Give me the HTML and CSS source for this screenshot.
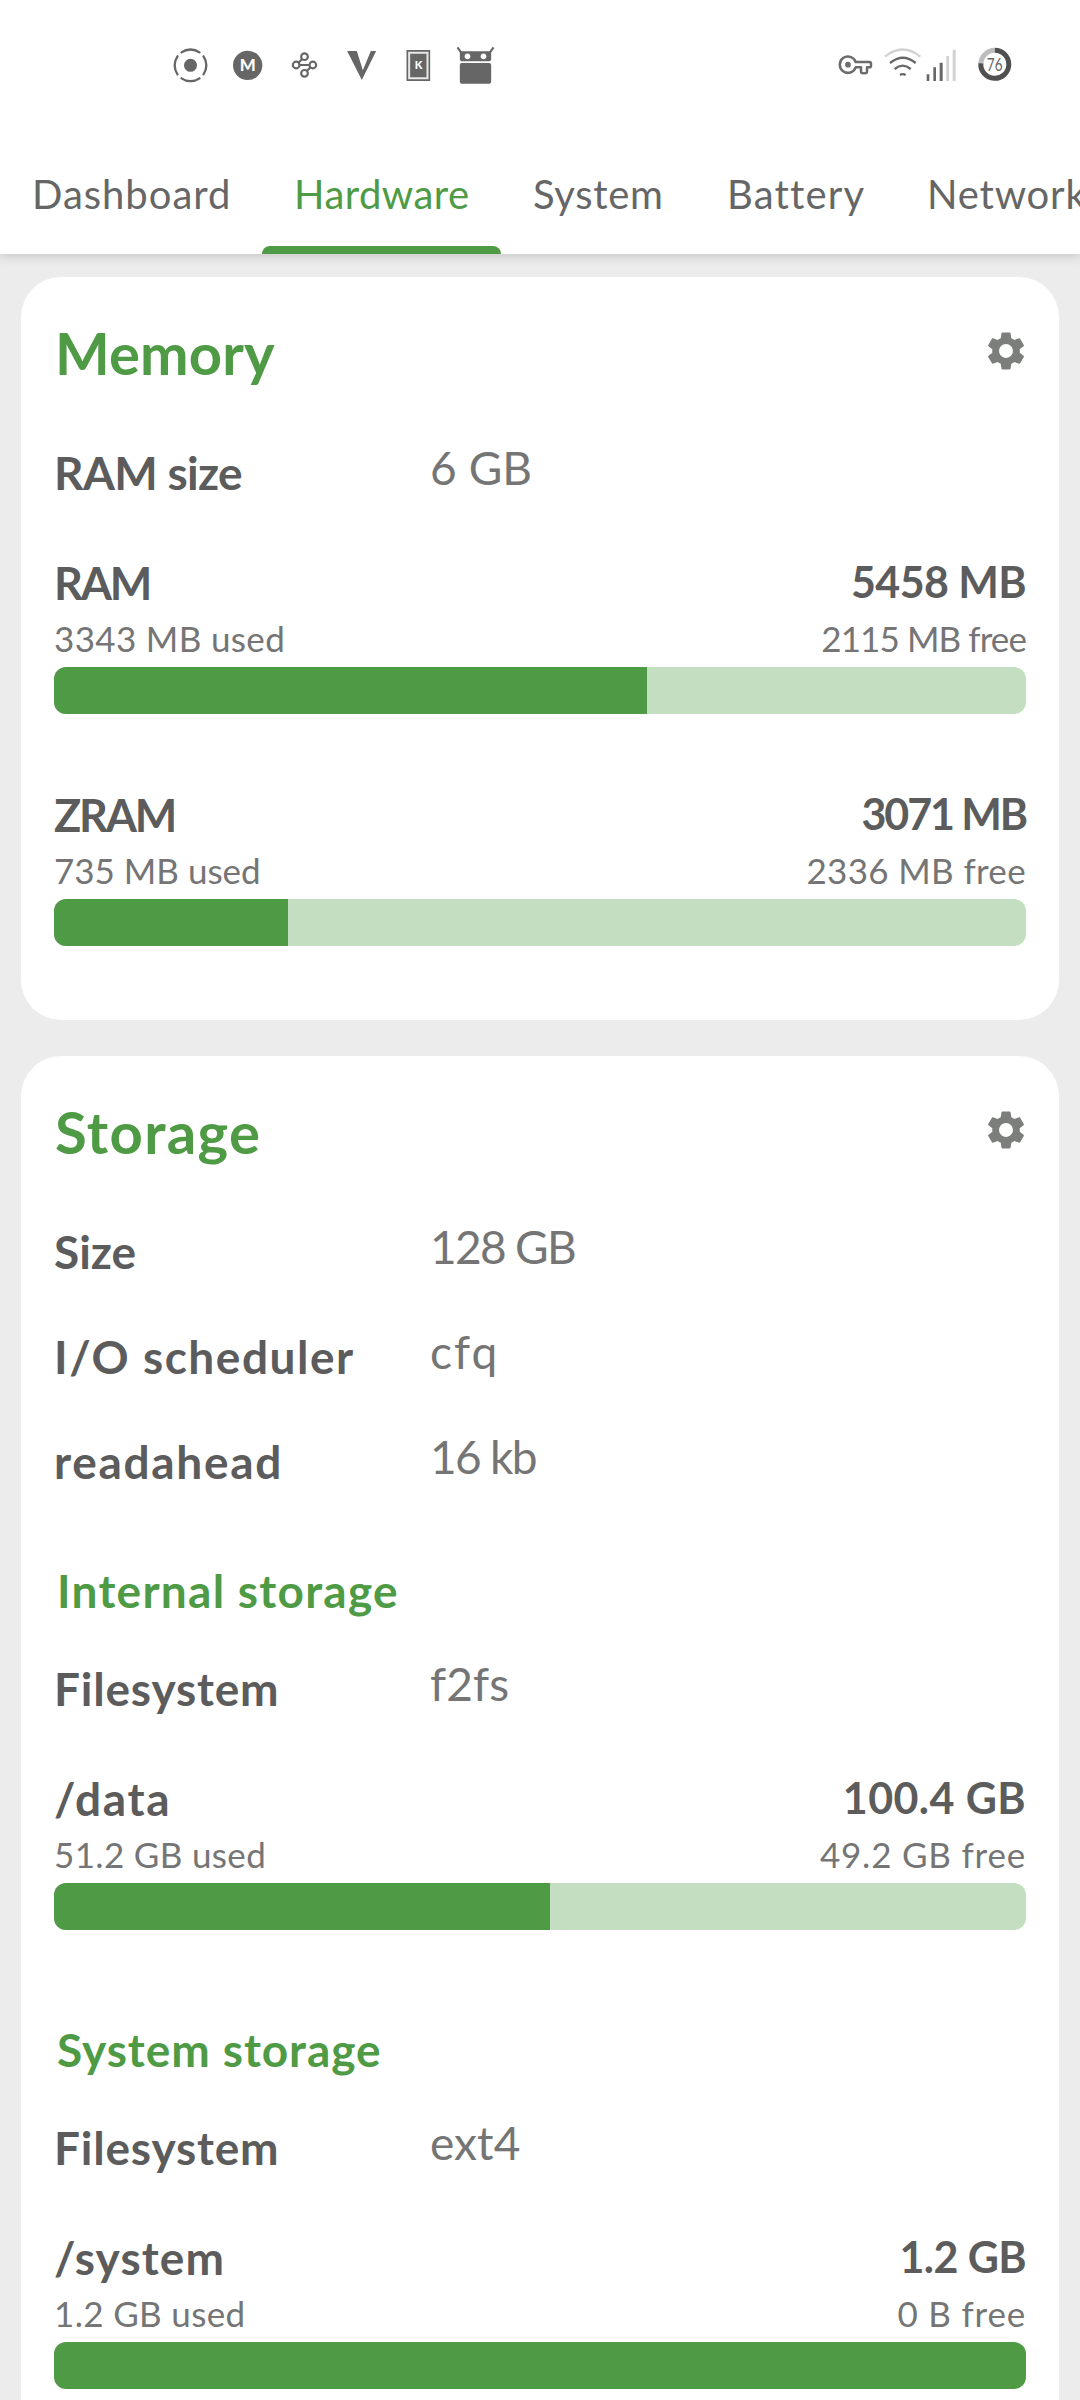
FILE: index.html
```
<!DOCTYPE html>
<html lang="en">
<head>
<meta charset="utf-8">
<title>Hardware</title>
<link rel="stylesheet" href="styles.css">
</head>
<body>
<svg class="defs" aria-hidden="true">
  <symbol id="gear" viewBox="0 0 24 24"><path d="M19.14 12.94c.04-.3.06-.61.06-.94 0-.32-.02-.64-.07-.94l2.03-1.58c.18-.14.23-.41.12-.61l-1.92-3.32c-.12-.22-.37-.29-.59-.22l-2.39.96c-.5-.38-1.03-.7-1.62-.94l-.36-2.54c-.04-.24-.24-.41-.48-.41h-3.84c-.24 0-.43.17-.47.41l-.36 2.54c-.59.24-1.13.57-1.62.94l-2.39-.96c-.22-.08-.47 0-.59.22L2.740 8.870c-.12.21-.08.47.12.61l2.030 1.580c-.05.3-.07.63-.07.94s.02.64.07.94l-2.030 1.580c-.18.14-.23.41-.12.61l1.920 3.320c.12.22.37.29.59.22l2.390-.96c.5.38 1.030.7 1.620.94l.36 2.540c.05.24.24.41.48.41h3.840c.24 0 .44-.17.47-.41l.36-2.540c.59-.24 1.130-.56 1.620-.94l2.390.96c.22.08.47 0 .59-.22l1.920-3.320c.12-.22.07-.47-.12-.61l-2.010-1.580zM12 15.600c-1.980 0-3.600-1.620-3.600-3.600s1.620-3.600 3.600-3.600 3.600 1.620 3.600 3.600-1.620 3.600-3.600 3.600z"/></symbol>
</svg>
<div class="screen">
  <header class="header">
    <div class="status">
      <div class="status-group">
        <svg class="notif" viewBox="35.5 45 171 120"><circle cx="121" cy="106" r="19.5" fill="#666"/><g fill="none" stroke="#666" stroke-width="7" stroke-linecap="round"><path d="M94 67a47 47 0 0 1 54 0M94 145a47 47 0 0 0 54 0M82 79a47 47 0 0 0 0 54M160 79a47 47 0 0 1 0 54"/></g></svg>
        <svg class="notif" viewBox="206.5 45 171 120"><circle cx="292.5" cy="106" r="44" fill="#666"/><text class="mark mark-m" x="268.5" y="124" textLength="48" lengthAdjust="spacingAndGlyphs">M</text></svg>
        <svg class="notif" viewBox="377.5 45 171 120"><g fill="none" stroke="#666" stroke-width="6.5"><circle cx="463" cy="80" r="10"/><circle cx="438" cy="105" r="10"/><circle cx="488" cy="105" r="10"/><circle cx="463" cy="130" r="10"/><path d="M456 87l-11 11M448 105h30M481 112l-11 11"/></g></svg>
        <svg class="notif" viewBox="548.5 45 171 120"><path d="M591 63h29l18 58 24-58h16l-43 87z" fill="#666"/></svg>
        <svg class="notif" viewBox="719.5 45 171 120"><path d="M769 60h71v93h-71z" fill="#666"/><path d="M777 68h55v77h-55z" fill="none" stroke="#e8e8e8" stroke-width="6"/><text class="mark mark-k" x="805" y="117">K</text></svg>
        <svg class="notif" viewBox="890.5 45 171 120"><path d="M929 64h94v24a6 6 0 0 1-6 6h-82a6 6 0 0 1-6-6zM935 99h82a6 6 0 0 1 6 6v50a6 6 0 0 1-6 6h-82a6 6 0 0 1-6-6v-50a6 6 0 0 1 6-6z" fill="#666"/><path d="M922 52l11 16M1030 52l-11 16" stroke="#666" stroke-width="6"/><circle cx="952" cy="79" r="8.5" fill="#fff"/><circle cx="1000" cy="79" r="8.5" fill="#fff"/></svg>
      </div>
      <div class="status-group">
        <svg class="key" viewBox="50 45 135 120"><path d="M106 96h41q5 0 5 5v6q0 5-5 5h-7v12q0 6-6 6h-6q-6 0-6-6v-12h-16a24.500 24.500 0 1 1 0-16z" fill="none" stroke="#6c6c6c" stroke-width="7.5" stroke-linejoin="round"/><circle cx="83" cy="104" r="8.5" fill="#6c6c6c"/></svg>
        <svg class="wifi" viewBox="185 45 125 120"><g fill="none" stroke-width="7"><path d="M194 80q53-43 106 0" stroke="#d2d2d2"/><path d="M209 99q39-32 77 0M223 117q24-20 48 0M239 135q8-5 17 0" stroke="#666"/></g></svg>
        <svg class="signal" viewBox="310 45 160 120"><path d="M321 133h8v20h-8zM341 112h8v41h-8zM360 98h9v55h-9z" fill="#666"/><path d="M380 78h8v75h-8zM399 59h9v94h-9z" fill="#d2d2d2"/></svg>
        <svg class="battery" viewBox="470 45 110 120"><g fill="none" stroke-width="15"><path d="M481.5 103a42 42 0 0 1 42-42" stroke="#bdbdbd"/><path d="M523.5 61a42 42 0 1 1-42 39" stroke="#505050"/></g><text class="level" x="523" y="122" textLength="47" lengthAdjust="spacingAndGlyphs">76</text></svg>
      </div>
    </div>
    <nav class="tabs">
      <span class="tab dashboard">Dashboard</span>
      <span class="tab hardware active">Hardware</span>
      <span class="tab system">System</span>
      <span class="tab battery-tab">Battery</span>
      <span class="tab network">Network</span>
    </nav>
  </header>

  <main class="content">
    <section class="card">
      <div class="card-head"><h1 class="title memory">Memory</h1><svg class="gear"><use href="#gear"/></svg></div>
      <div class="row"><span class="label ram-size">RAM size</span><span class="value">6 GB</span></div>
      <div class="meter">
        <div class="meter-head"><span class="label caps">RAM</span><span class="total tight">5458 MB</span></div>
        <div class="meter-sub"><span>3343 MB used</span><span class="narrow">2115 MB free</span></div>
        <div class="bar"><div class="fill" style="width:61%"></div></div>
      </div>
      <div class="meter">
        <div class="meter-head"><span class="label caps">ZRAM</span><span class="total tighter">3071 MB</span></div>
        <div class="meter-sub"><span class="plain">735 MB used</span><span>2336 MB free</span></div>
        <div class="bar"><div class="fill" style="width:24.1%"></div></div>
      </div>
    </section>

    <section class="card">
      <div class="card-head"><h1 class="title">Storage</h1><svg class="gear"><use href="#gear"/></svg></div>
      <div class="row"><span class="label plain">Size</span><span class="value digits">128 GB</span></div>
      <div class="row"><span class="label wide">I/O scheduler</span><span class="value loose">cfq</span></div>
      <div class="row"><span class="label wider">readahead</span><span class="value digits">16 kb</span></div>
      <h2 class="subtitle">Internal storage</h2>
      <div class="row"><span class="label">Filesystem</span><span class="value">f2fs</span></div>
      <div class="meter">
        <div class="meter-head"><span class="label wider">/data</span><span class="total hundred">100.4 GB</span></div>
        <div class="meter-sub"><span>51.2 GB used</span><span class="airy">49.2 GB free</span></div>
        <div class="bar"><div class="fill" style="width:51%"></div></div>
      </div>
      <h2 class="subtitle system-storage">System storage</h2>
      <div class="row"><span class="label">Filesystem</span><span class="value">ext4</span></div>
      <div class="meter">
        <div class="meter-head"><span class="label path">/system</span><span class="total tight">1.2 GB</span></div>
        <div class="meter-sub"><span>1.2 GB used</span><span class="airy">0 B free</span></div>
        <div class="bar"><div class="fill" style="width:100%"></div></div>
      </div>
    </section>
  </main>
</div>
</body>
</html>
```
FILE: styles.css
```
* { box-sizing: border-box; }
body { margin: 0; background: #ececec; font-family: Lato, "Liberation Sans", sans-serif; }
.defs { display: none; }
.screen { width: 1080px; height: 2400px; overflow: hidden; background: #ececec; }

/* Header: system status icons and scrolling tabs */
.header { background: #fff; height: 254px; position: relative; box-shadow: 0 2px 10px rgba(0, 0, 0, .17); }
.status { height: 130px; padding: 45px 66.7px 0 161.8px; display: flex; justify-content: space-between; }
.status-group { display: flex; height: 40px; }
.status-group svg { height: 40px; display: block; }
.notif { width: 57px; }
.key { width: 45px; }
.wifi { width: 41.67px; }
.signal { width: 53.33px; }
.battery { width: 36.67px; }
.mark { fill: #fff; font-weight: 900; }
.mark-m { font-size: 50px; }
.mark-k { font-size: 33px; text-anchor: middle; }
.level { fill: #666; font-size: 50px; text-anchor: middle; }

.tabs { display: flex; height: 124px; overflow: hidden; }
.tab { flex: none; padding: 34px 0 0 32px; font-size: 40px; line-height: 60px; color: #666; white-space: nowrap; }
.dashboard { width: 262px; letter-spacing: .98px; }
.hardware { width: 239px; letter-spacing: .46px; }
.system { width: 194px; letter-spacing: .68px; }
.battery-tab { width: 201px; letter-spacing: 1.16px; }
.network { padding-left: 31px; letter-spacing: .8px; }
.active { color: #4f9b45; display: flex; flex-direction: column; justify-content: space-between; }
.active::after { content: ""; height: 8px; margin-left: -32px; background: #4f9b45; border-radius: 8px 8px 0 0; }

/* Cards */
.content { padding: 23px 21px 0; display: flex; flex-direction: column; gap: 36px; }
.card { background: #fff; border-radius: 40px; padding: 40px 33px 27px; }
.card-head { display: flex; justify-content: space-between; height: 107px; padding-left: 1px; }
.title { margin: 1px 0 0; font-size: 58px; line-height: 70px; font-weight: 700; color: #4f9b45; letter-spacing: 1.33px; }
.memory { letter-spacing: .1px; }
.gear { width: 46px; height: 46px; margin: 11px -3px 0 0; fill: #7c7e7c; }
.subtitle { margin: 0; height: 122px; padding: 43px 0 0 3px; font-size: 46px; line-height: 60px; font-weight: 700; color: #4f9b45; letter-spacing: 1.26px; }
.system-storage { letter-spacing: .93px; }

.row { display: grid; grid-template-columns: 376px 1fr; height: 105px; }
.row .label { padding-top: 19px; }
.label { font-size: 46px; line-height: 60px; font-weight: 700; color: #5c5c5c; letter-spacing: .79px; }
.value { padding-top: 14px; font-size: 46px; line-height: 60px; color: #757575; letter-spacing: .1px; }

.meter { padding: 24px 0 47px; }
.meter-head { display: flex; justify-content: space-between; height: 60px; }
.total { margin-top: -1px; font-size: 43px; line-height: 60px; font-weight: 700; color: #5c5c5c; letter-spacing: .77px; }
.meter-sub { display: flex; justify-content: space-between; margin: 5px 0 9px; font-size: 35px; line-height: 40px; color: #757575; letter-spacing: .34px; }
.bar { height: 47px; border-radius: 12px; background: #c4dec1; overflow: hidden; }
.fill { height: 100%; background: #4f9b45; }

/* Letter fitting */
.ram-size { letter-spacing: -.69px; }
.caps { font-size: 45px; letter-spacing: -2.2px; }
.plain { letter-spacing: 0; }
.wide { letter-spacing: 1.52px; }
.wider { letter-spacing: 1.7px; }
.path { letter-spacing: 1.1px; }
.tight { letter-spacing: -.6px; }
.tighter { letter-spacing: -2.1px; }
.hundred { letter-spacing: .4px; }
.narrow { letter-spacing: -.9px; }
.airy { letter-spacing: .8px; }
.digits { letter-spacing: -1.7px; }
.loose { letter-spacing: 2.1px; }
```
